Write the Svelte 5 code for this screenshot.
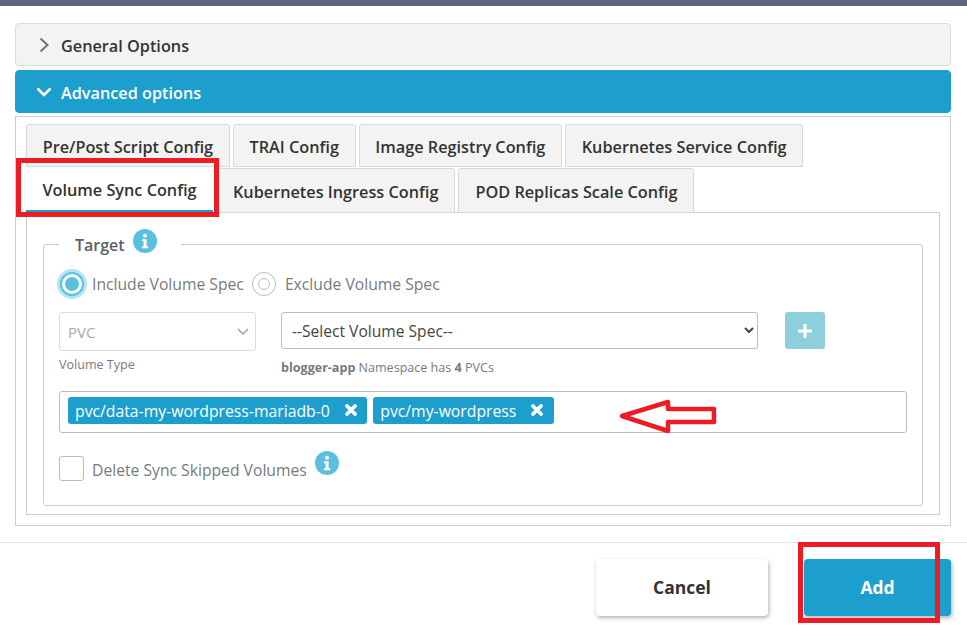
<script>
  const rowOne = ["Pre/Post Script Config", "TRAI Config", "Image Registry Config", "Kubernetes Service Config"];
  const rowTwo = ["Kubernetes Ingress Config", "POD Replicas Scale Config"];
  const tags = ["pvc/data-my-wordpress-mariadb-0", "pvc/my-wordpress"];
</script>

{#snippet info()}
  <svg class="info" viewBox="0 0 24 24" width="24" height="24" aria-hidden="true">
    <circle cx="12" cy="12" r="12" fill="#5bc0de" />
    <circle cx="12" cy="6.8" r="2" fill="#fff" />
    <path d="M9 10.2h4.6v7h1.6v2H9v-2h1.6v-5H9z" fill="#fff" />
  </svg>
{/snippet}

<div class="page">
  <div class="topbar"></div>

  <main class="body">
    <div class="accordion">
      <svg class="chev" viewBox="0 0 12 16" width="12" height="16" aria-hidden="true">
        <path d="M2.5 1.5 9.5 8l-7 6.5" fill="none" stroke="#77706a" stroke-width="2" />
      </svg>
      <span>General Options</span>
    </div>
    <div class="accordion open">
      <svg class="chev" viewBox="0 0 16 12" width="16" height="12" aria-hidden="true">
        <path d="M1.5 2.5 8 9l6.5-6.5" fill="none" stroke="#fff" stroke-width="2.6" />
      </svg>
      <span>Advanced options</span>
    </div>

    <section class="outer">
      <div class="tabs one">
        {#each rowOne as tab}
          <div class="tab">{tab}</div>
        {/each}
      </div>
      <div class="tabs two">
        <div class="tab active">Volume Sync Config</div>
        {#each rowTwo as tab}
          <div class="tab">{tab}</div>
        {/each}
      </div>

      <div class="panel">
        <fieldset>
          <legend>Target {@render info()}</legend>

          <div class="radios">
            <span class="radio on"><i></i></span>
            <span class="radio-label first">Include Volume Spec</span>
            <span class="radio"><i></i></span>
            <span class="radio-label second">Exclude Volume Spec</span>
          </div>

          <div class="selects">
            <div class="col-type">
              <div class="fake-select">
                PVC
                <svg viewBox="0 0 12 8" width="12" height="8" aria-hidden="true">
                  <path d="M1 1l5 5 5-5" fill="none" stroke="#999" stroke-width="1.3" />
                </svg>
              </div>
              <div class="hint type">Volume Type</div>
            </div>
            <div class="col-spec">
              <select class="spec">
                <option>--Select Volume Spec--</option>
              </select>
              <div class="hint"><b>blogger-app</b> Namespace has <b>4</b> PVCs</div>
            </div>
            <button class="plus" type="button" aria-label="add">
              <svg viewBox="0 0 14 14" width="14" height="14" aria-hidden="true">
                <path d="M7 0v14M0 7h14" stroke="#fff" stroke-width="3" />
              </svg>
            </button>
          </div>

          <div class="tag-input">
            {#each tags as tag}
              <span class="tag">
                {tag}
                <svg viewBox="0 0 12 12" width="12" height="12" aria-hidden="true">
                  <path d="M2 2l8 8M10 2l-8 8" stroke="#fff" stroke-width="3.8" stroke-linecap="round" />
                </svg>
              </span>
            {/each}
          </div>

          <div class="check-row">
            <span class="check"></span>
            <span class="radio-label">Delete Sync Skipped Volumes</span>
            {@render info()}
          </div>
        </fieldset>
      </div>
    </section>
  </main>

  <footer>
    <button class="btn cancel" type="button">Cancel</button>
    <button class="btn add" type="button">Add</button>
  </footer>

  <!-- hand-drawn annotations on top of the screenshot -->
  <div class="mark mark-tab"></div>
  <div class="mark mark-add"></div>
  <svg class="arrow" viewBox="0 0 104 36" width="104" height="36" aria-hidden="true">
    <path d="M6 18 52 4v7h46v13H52v9z" fill="none" stroke="#ed1c24" stroke-width="4.5" stroke-linejoin="round" />
  </svg>
</div>

<style>
  :global(body) {
    margin: 0;
    background: #fff;
  }
  .page {
    position: relative;
    width: 967px;
    height: 629px;
    overflow: hidden;
    font-family: "Open Sans", "Liberation Sans", sans-serif;
    color: #333;
  }
  .topbar {
    height: 6px;
    background: #5f6579;
  }
  .body {
    padding: 17px 16px 0 15px;
  }
  .accordion {
    display: flex;
    align-items: center;
    box-sizing: border-box;
    height: 43px;
    margin-bottom: 4px;
    padding-left: 22px;
    gap: 11px;
    background: #f3f3f3;
    border: 1px solid #dcdcdc;
    border-radius: 4px;
    font-size: 16.25px;
    font-weight: 600;
    color: #333;
  }
  .accordion span {
    padding-top: 2px;
  }
  .accordion.open {
    padding-left: 20px;
    gap: 9px;
    margin-bottom: 3px;
    background: #1c9fcc;
    border-color: #1c9fcc;
    color: #fff;
  }
  .outer {
    box-sizing: border-box;
    height: 410px;
    padding: 7px 10px 0;
    border: 1px solid #ccc;
  }
  .tabs {
    display: flex;
    gap: 3px;
  }
  .tab {
    box-sizing: border-box;
    display: flex;
    align-items: center;
    justify-content: center;
    height: 43px;
    padding: 2px 15.7px 0;
    background: #f3f3f3;
    border: 1px solid #d8d8d8;
    border-radius: 3px 3px 0 0;
    font-size: 16.25px;
    font-weight: 600;
    white-space: nowrap;
  }
  .two {
    position: relative;
    z-index: 1;
    height: 45px;
    margin-top: 1px;
  }
  .two .tab {
    height: 45px;
    padding: 2px 16px 0;
  }
  .two .tab.active {
    width: 187px;
    height: 44px;
    background: #fff;
    border: 0;
    border-bottom: 2px solid #1c9fcc;
    border-radius: 0;
  }
  .panel {
    box-sizing: border-box;
    height: 303px;
    margin-top: -1px;
    padding: 18px 16px 0;
    border: 1px solid #ccc;
  }
  fieldset {
    box-sizing: border-box;
    height: 275px;
    margin: 0;
    padding: 0 15px;
    border: 1px solid #ccc;
    border-radius: 3px;
  }
  legend {
    box-sizing: border-box;
    display: flex;
    align-items: center;
    gap: 8px;
    height: 26px;
    padding: 2px 24px 0 16px;
    font-size: 16px;
    font-weight: 600;
    color: #596069;
  }
  legend .info {
    position: relative;
    top: -4px;
  }
  .radios {
    display: flex;
    align-items: center;
    height: 30px;
    margin-top: 12px;
    padding-left: 1px;
  }
  .radio {
    box-sizing: border-box;
    display: flex;
    align-items: center;
    justify-content: center;
    width: 24px;
    height: 24px;
    border: 1px solid #bbb;
    border-radius: 50%;
    background: #fff;
  }
  .radio i {
    box-sizing: border-box;
    width: 12px;
    height: 12px;
    border: 1px solid #bbb;
    border-radius: 50%;
  }
  .radio.on {
    border: 2px solid #5bc0de;
    box-shadow: 0 0 0 3px #b5e3f3;
  }
  .radio.on i {
    width: 14px;
    height: 14px;
    border: 0;
    background: #5bc0de;
  }
  .radio-label {
    margin-left: 8px;
    font-size: 15.7px;
    color: #757b80;
  }
  .radio-label.first {
    margin-right: 8px;
  }
  .radio-label.second {
    margin-left: 9px;
  }
  .selects {
    display: flex;
    margin-top: 13px;
  }
  .col-type {
    width: 197px;
    margin-right: 25px;
  }
  .col-spec {
    width: 477px;
    margin-right: 27px;
  }
  .fake-select {
    box-sizing: border-box;
    display: flex;
    align-items: center;
    justify-content: space-between;
    height: 39px;
    padding: 0 6px 0 8px;
    border: 1px solid #ddd;
    border-radius: 3px;
    font-size: 15px;
    color: #aaa;
  }
  .spec {
    box-sizing: border-box;
    display: block;
    width: 100%;
    height: 37px;
    padding: 0 6px;
    border: 1px solid #bbb;
    border-radius: 3px;
    background: #fff;
    font-family: inherit;
    font-size: 15.6px;
    color: #444;
  }
  .hint {
    margin-top: 10px;
    font-size: 12.55px;
    color: #757b80;
  }
  .hint.type {
    margin-top: 5px;
  }
  .hint b {
    font-weight: 700;
  }
  .plus {
    display: flex;
    align-items: center;
    justify-content: center;
    width: 40px;
    height: 37px;
    padding: 0;
    border: 0;
    border-radius: 3px;
    background: #8dd0dc;
  }
  .tag-input {
    box-sizing: border-box;
    display: flex;
    gap: 6px;
    width: 848px;
    height: 42px;
    margin-top: 15px;
    padding: 5px 8px;
    border: 1px solid #bbb;
    border-radius: 3px;
  }
  .tag {
    box-sizing: border-box;
    display: flex;
    align-items: center;
    height: 27px;
    padding: 0 10.5px 0 7px;
    background: #1c9fcc;
    border-radius: 3px;
    font-size: 15.75px;
    color: #fff;
    white-space: nowrap;
  }
  .tag svg {
    margin: -2px 0 0 15px;
  }
  .check-row {
    position: relative;
    display: flex;
    align-items: center;
    margin-top: 23px;
  }
  .check {
    box-sizing: border-box;
    width: 25px;
    height: 25px;
    border: 1px solid #bbb;
    border-radius: 3px;
  }
  .check-row .radio-label {
    padding-top: 2px;
  }
  .check-row .info {
    position: relative;
    top: -6px;
    margin-left: 8px;
  }
  footer {
    display: flex;
    justify-content: flex-end;
    gap: 36px;
    box-sizing: border-box;
    height: 87px;
    margin-top: 16px;
    padding: 16px 16px 0 0;
    border-top: 1px solid #e5e5ee;
  }
  .btn {
    height: 57px;
    padding: 0 0 2px;
    border: 0;
    border-radius: 4px;
    font-family: inherit;
    font-size: 17.5px;
    font-weight: 700;
    box-shadow: 1px 2px 4px rgba(0, 0, 0, 0.3);
  }
  .cancel {
    width: 172px;
    background: #fff;
    color: #333;
  }
  .add {
    width: 147px;
    background: #1c9fcc;
    color: #fff;
  }
  .mark {
    position: absolute;
    box-sizing: border-box;
    border: 5px solid #ed1c24;
    z-index: 2;
  }
  .mark-tab {
    left: 16px;
    top: 158px;
    width: 203px;
    height: 59px;
  }
  .mark-add {
    left: 798px;
    top: 542px;
    width: 142px;
    height: 81px;
  }
  .arrow {
    position: absolute;
    left: 616px;
    top: 398px;
    z-index: 2;
  }
</style>
